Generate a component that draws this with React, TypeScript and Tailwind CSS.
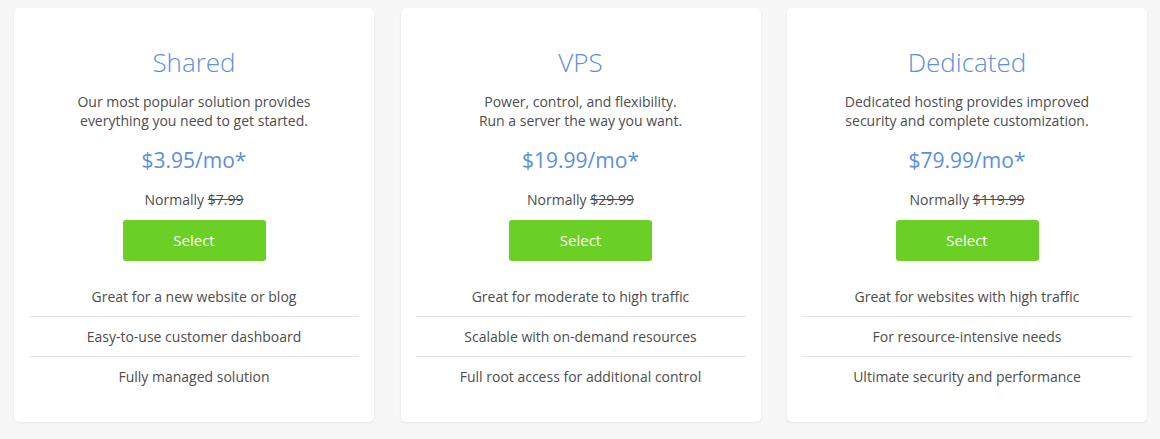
const plans = [
  {
    name: "Shared",
    blurb: ["Our most popular solution provides", "everything you need to get started."],
    price: "$3.95/mo*",
    normally: "$7.99",
    features: [
      "Great for a new website or blog",
      "Easy-to-use customer dashboard",
      "Fully managed solution",
    ],
  },
  {
    name: "VPS",
    blurb: ["Power, control, and flexibility.", "Run a server the way you want."],
    price: "$19.99/mo*",
    normally: "$29.99",
    features: [
      "Great for moderate to high traffic",
      "Scalable with on-demand resources",
      "Full root access for additional control",
    ],
  },
  {
    name: "Dedicated",
    blurb: ["Dedicated hosting provides improved", "security and complete customization."],
    price: "$79.99/mo*",
    normally: "$119.99",
    features: [
      "Great for websites with high traffic",
      "For resource-intensive needs",
      "Ultimate security and performance",
    ],
  },
];

export default function App() {
  return (
    <div
      className="min-h-[439px] bg-[#f7f7f7] pl-[14px] pr-[13px] pt-2"
      style={{ fontFamily: '"Open Sans", "Liberation Sans", sans-serif' }}
    >
      <div className="flex gap-[26.5px]">
        {plans.map((p) => (
          <div
            key={p.name}
            className="flex flex-1 flex-col items-center rounded-[5px] bg-white px-[15px] pb-[25px] pt-[38px] text-center shadow-[0_1px_3px_rgba(0,0,0,0.08)]"
          >
            <h2 className="text-[26px] font-light leading-[33px] text-[#5b8fe0]">
              {p.name}
            </h2>
            <p className="mt-[13px] text-[14px] leading-[19px] text-[#4d4d4d]">
              {p.blurb[0]}
              <br />
              {p.blurb[1]}
            </p>
            <p className="mt-[15px] text-[21px] leading-[30px] text-[#5b8fe0]">
              {p.price}
            </p>
            <p className="mt-[15px] text-[14px] leading-[20px] text-[#4d4d4d]">
              Normally <span className="line-through">{p.normally}</span>
            </p>
            <button
              type="button"
              className="mt-[10px] h-[41px] w-[143px] rounded-[3px] bg-[#6bd026] text-[15px] text-white"
            >
              Select
            </button>
            <ul className="mt-[16px] w-full">
              {p.features.map((f, i) => (
                <li
                  key={f}
                  className={
                    i < p.features.length - 1
                      ? "flex h-[40px] items-center justify-center border-b border-[#e6e6e6] pb-px text-[14px] text-[#4d4d4d]"
                      : "flex h-[40px] items-center justify-center pb-px text-[14px] text-[#4d4d4d]"
                  }
                >
                  {f}
                </li>
              ))}
            </ul>
          </div>
        ))}
      </div>
    </div>
  );
}
